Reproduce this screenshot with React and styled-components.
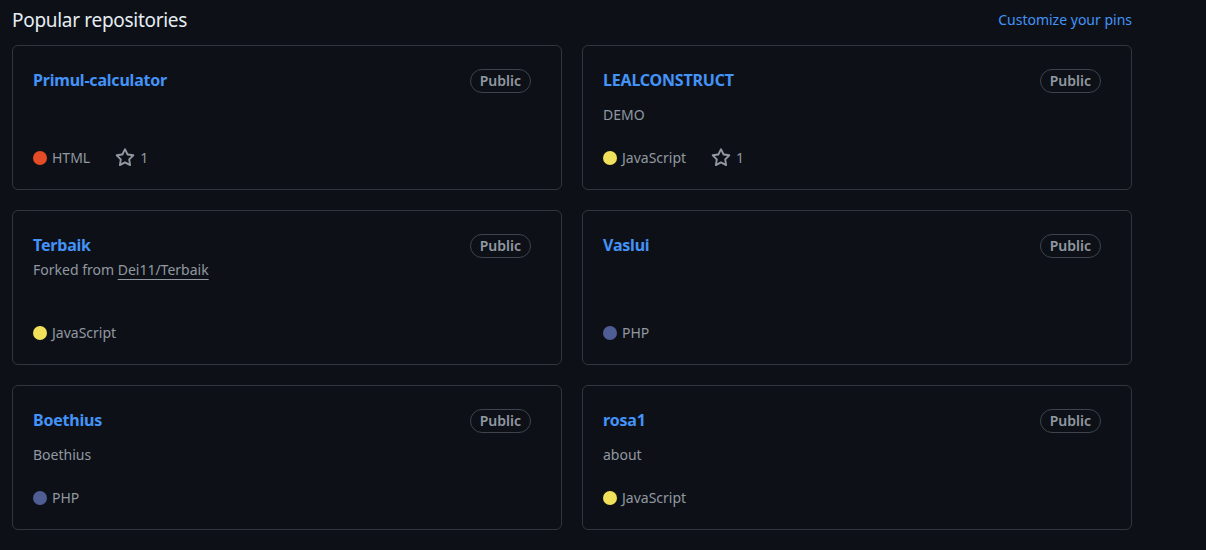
import styled, { createGlobalStyle } from "styled-components";

const GlobalStyle = createGlobalStyle`
  body {
    margin: 0;
    background: #0d1117;
    font-family: "Noto Sans", "Liberation Sans", sans-serif;
    color: #e6edf3;
  }
`;

const repos = [
  { name: "Primul-calculator", lang: "HTML", color: "#e34c26", stars: 1 },
  { name: "LEALCONSTRUCT", desc: "DEMO", lang: "JavaScript", color: "#f1e05a", stars: 1 },
  { name: "Terbaik", fork: "Dei11/Terbaik", lang: "JavaScript", color: "#f1e05a" },
  { name: "Vaslui", lang: "PHP", color: "#4f5d95" },
  { name: "Boethius", desc: "Boethius", lang: "PHP", color: "#4f5d95" },
  { name: "rosa1", desc: "about", lang: "JavaScript", color: "#f1e05a" },
];

function StarIcon() {
  return (
    <svg width="20" height="20" viewBox="0 0 16 16" fill="currentColor">
      <path d="M8 .25a.75.75 0 0 1 .673.418l1.882 3.815 4.21.612a.75.75 0 0 1 .416 1.279l-3.046 2.97.719 4.192a.751.751 0 0 1-1.088.791L8 12.347l-3.766 1.98a.75.75 0 0 1-1.088-.79l.72-4.194L.818 6.374a.75.75 0 0 1 .416-1.28l4.21-.611L7.327.668A.75.75 0 0 1 8 .25Zm0 2.445L6.615 5.5a.75.75 0 0 1-.564.41l-3.097.45 2.24 2.184a.75.75 0 0 1 .216.664l-.528 3.084 2.769-1.456a.75.75 0 0 1 .698 0l2.77 1.456-.53-3.084a.75.75 0 0 1 .216-.664l2.24-2.183-3.096-.45a.75.75 0 0 1-.564-.41L8 2.694Z" />
    </svg>
  );
}

export default function App() {
  return (
    <>
      <GlobalStyle />
      <Section>
        <Header>
          <Heading>Popular repositories</Heading>
          <CustomizeLink href="#">Customize your pins</CustomizeLink>
        </Header>
        <Grid>
          {repos.map((repo) => (
            <Card key={repo.name}>
              <TitleRow>
                <RepoName href="#">{repo.name}</RepoName>
                <Badge>Public</Badge>
              </TitleRow>
              {repo.fork && (
                <ForkLine>
                  Forked from <ForkLink href="#">{repo.fork}</ForkLink>
                </ForkLine>
              )}
              {repo.desc ? <Desc>{repo.desc}</Desc> : repo.fork && <Desc $empty />}
              <Meta>
                <Lang>
                  <Dot $color={repo.color} />
                  {repo.lang}
                </Lang>
                {repo.stars && (
                  <Stars href="#">
                    <StarIcon />
                    {repo.stars}
                  </Stars>
                )}
              </Meta>
            </Card>
          ))}
        </Grid>
      </Section>
    </>
  );
}

const Section = styled.div`
  width: 1120px;
  padding: 5px 0 0 12px;
`;

const Header = styled.div`
  display: flex;
  justify-content: space-between;
  align-items: center;
  height: 30px;
  margin-bottom: 10px;
`;

const Heading = styled.h2`
  margin: 0;
  font-size: 19px;
  letter-spacing: -0.3px;
  font-weight: 400;
  color: #e6edf3;
`;

const CustomizeLink = styled.a`
  font-size: 14px;
  color: #4493f8;
  text-decoration: none;
  margin-top: -2px;
`;

const Grid = styled.div`
  display: grid;
  grid-template-columns: repeat(2, 1fr);
  gap: 20px;
`;

const Card = styled.div`
  display: flex;
  flex-direction: column;
  border: 1px solid #30363d;
  border-radius: 6px;
  padding: 22px 20px 21px;
`;

const TitleRow = styled.div`
  display: flex;
  justify-content: space-between;
  align-items: flex-start;
  height: 24px;
`;

const RepoName = styled.a`
  font-size: 16px;
  letter-spacing: -0.2px;
  font-weight: 700;
  line-height: 24px;
  color: #4493f8;
  text-decoration: none;
`;

const Badge = styled.span`
  margin: 1px 10px 0 0;
  padding: 0 9px;
  height: 22px;
  line-height: 22px;
  border: 1px solid #3d444d;
  border-radius: 2em;
  font-size: 14px;
  font-weight: 600;
  color: #9198a1;
`;

const ForkLine = styled.p`
  margin: 2px 0 0;
  font-size: 14px;
  line-height: 21px;
  color: #9198a1;
`;

const ForkLink = styled.a`
  color: #9198a1;
  text-decoration: underline;
  text-underline-offset: 4px;
  text-decoration-color: #9198a1;
`;

const Desc = styled.p`
  margin: 12px 0 0;
  font-size: 14px;
  line-height: 21px;
  min-height: ${(p) => (p.$empty ? "8px" : "21px")};
  height: ${(p) => (p.$empty ? "8px" : "auto")};
  color: #9198a1;
`;

const Meta = styled.div`
  display: flex;
  align-items: center;
  margin-top: auto;
  padding-top: 22px;
  font-size: 14px;
  line-height: 21px;
  color: #9198a1;
`;

const Lang = styled.span`
  display: flex;
  align-items: center;
  margin-right: 25px;
`;

const Dot = styled.span`
  width: 14px;
  height: 14px;
  border-radius: 50%;
  background: ${(p) => p.$color};
  margin-right: 5px;
`;

const Stars = styled.a`
  display: flex;
  align-items: center;
  gap: 5px;
  color: #9198a1;
  text-decoration: none;
`;
